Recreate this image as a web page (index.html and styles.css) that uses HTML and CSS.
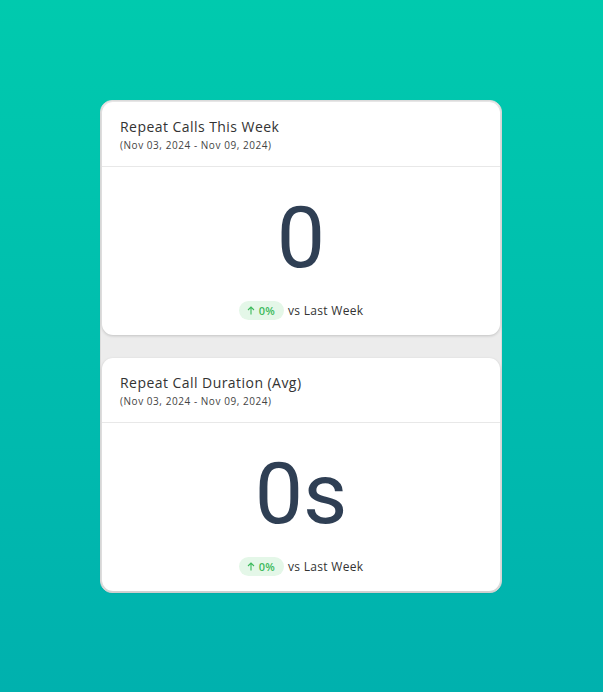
FILE: index.html
```html
<!DOCTYPE html>
<html lang="en">

<head>
  <meta charset="UTF-8">
  <meta name="viewport" content="width=device-width, initial-scale=1.0">
  <title>Repeat Calls</title>
  <link rel="stylesheet" href="styles.css">
</head>

<body>
  <main class="panel">
    <section class="card">
      <div class="card-head">
        <h2>Repeat Calls This Week</h2>
        <p>(Nov 03, 2024 - Nov 09, 2024)</p>
      </div>
      <div class="card-body">
        <div class="big-value">0</div>
        <div class="compare">
          <span class="badge">
            <svg class="arrow" width="8" height="9" viewBox="0 0 8 9"><path d="M4 8.5V1M1 4l3-3 3 3" fill="none" stroke="currentColor" stroke-width="1.1"/></svg>
            0%
          </span>
          <span>vs Last Week</span>
        </div>
      </div>
    </section>

    <section class="card">
      <div class="card-head">
        <h2>Repeat Call Duration (Avg)</h2>
        <p>(Nov 03, 2024 - Nov 09, 2024)</p>
      </div>
      <div class="card-body">
        <div class="big-value">0s</div>
        <div class="compare">
          <span class="badge">
            <svg class="arrow" width="8" height="9" viewBox="0 0 8 9"><path d="M4 8.5V1M1 4l3-3 3 3" fill="none" stroke="currentColor" stroke-width="1.1"/></svg>
            0%
          </span>
          <span>vs Last Week</span>
        </div>
      </div>
    </section>
  </main>
</body>

</html>
```

FILE: styles.css
```css
html,
body {
  margin: 0;
  height: 100%;
}

body {
  font-family: 'Open Sans', sans-serif;
  background: linear-gradient(to bottom, #00caae, #00b1ae);
  padding-top: 100px;
  box-sizing: border-box;
}

.panel {
  width: 398px;
  margin: 0 0 0 100px;
  padding: 1px;
  background-color: #ececec;
  border: 1px solid #dcdcdc;
  border-radius: 12px;
  display: flex;
  flex-direction: column;
  gap: 23px;
}

.card {
  background-color: white;
  border-radius: 11px;
  box-shadow: 0 1px 3px rgba(0, 0, 0, 0.18);
}

.card-head {
  padding: 15px 18px 0 18px;
  height: 49px;
  border-bottom: 1px solid #e8e8e8;
}

.card-head h2 {
  margin: 0;
  font-size: 14px;
  font-weight: 400;
  color: #333;
  line-height: 20px;
  letter-spacing: 0.45px;
}

.card-head p {
  margin: 1px 0 0 0;
  font-size: 10px;
  color: #444;
  line-height: 14px;
  letter-spacing: 0.55px;
}

.card-body {
  height: 168px;
  display: flex;
  flex-direction: column;
  align-items: center;
}

.big-value {
  font-family: Roboto, sans-serif;
  font-size: 86px;
  line-height: 86px;
  color: #2f3f54;
  margin-top: 28px;
}

.compare {
  margin-top: 20px;
  display: flex;
  align-items: center;
  gap: 4px;
  font-size: 12px;
  color: #333;
  letter-spacing: 0.3px;
}

.badge {
  display: flex;
  align-items: center;
  gap: 4px;
  background-color: #e4f7e8;
  color: #3dba5c;
  font-size: 11px;
  font-weight: 600;
  padding: 2px 9px 2px 8px;
  border-radius: 10px;
  line-height: 15px;
  letter-spacing: 0.3px;
}

.arrow {
  display: block;
}
```
